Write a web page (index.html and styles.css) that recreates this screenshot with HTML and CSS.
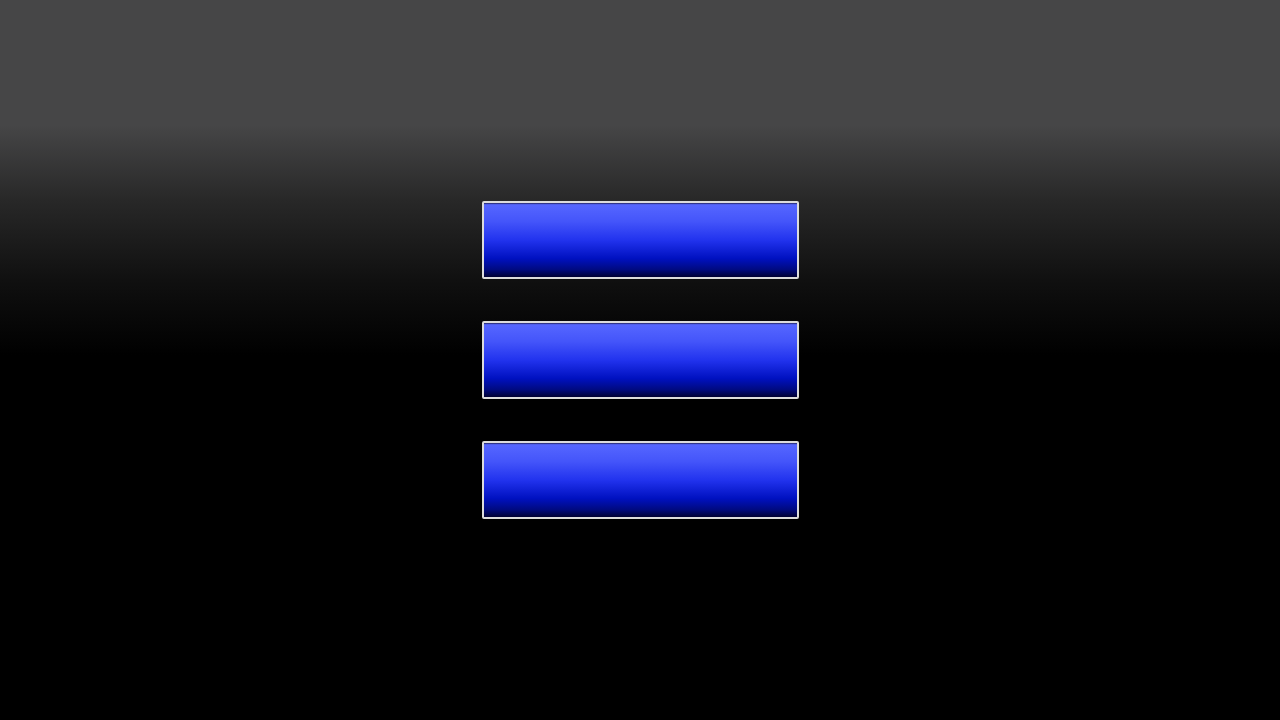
FILE: index.html
```html
<!DOCTYPE html>
<html lang="en">
<head>
<meta charset="utf-8">
<title>Menu</title>
<link rel="stylesheet" href="styles.css">
</head>
<body>
<main class="screen">
  <div class="menu">
    <button class="menu-btn" type="button"></button>
    <button class="menu-btn" type="button"></button>
    <button class="menu-btn" type="button"></button>
  </div>
</main>
</body>
</html>
```
FILE: styles.css
```css
html, body {
  margin: 0;
  padding: 0;
  height: 100%;
}
body {
  background: #000;
  font-family: "Liberation Sans", Arial, sans-serif;
}
.screen {
  width: 1280px;
  height: 720px;
  display: flex;
  align-items: center;
  justify-content: center;
  background: linear-gradient(to bottom, #464647 0px, #464647 125px, #282828 200px, #101010 280px, #000 355px, #000 720px);
}
.menu {
  display: flex;
  flex-direction: column;
  gap: 42px;
}
.menu-btn {
  display: block;
  box-sizing: border-box;
  width: 317px;
  height: 78px;
  margin: 0;
  padding: 0;
  border: 2px solid #dcdcdc;
  border-radius: 2px;
  background: linear-gradient(to bottom, #3a44a8 0px, #5566ff 2px, #4455fa 25%, #2233ee 50%, #0011c0 75%, #000a80 90%, #000033 100%);
  box-shadow: inset 0 1px 0 #30358a;
  cursor: pointer;
}
```
